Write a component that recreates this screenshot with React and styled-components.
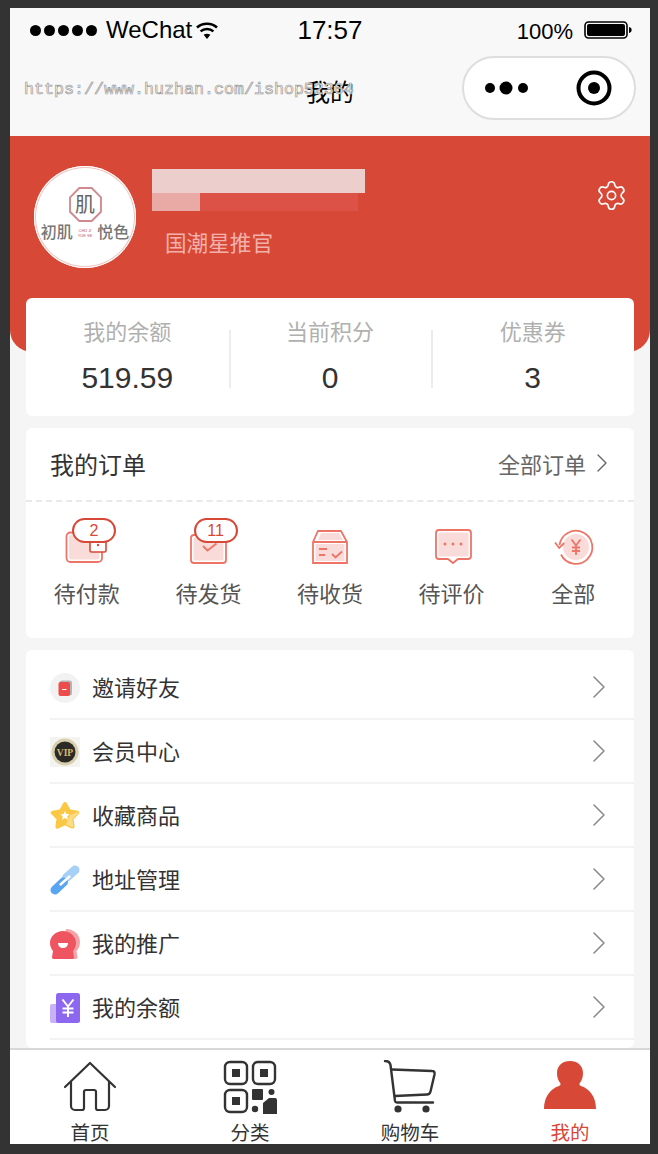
import React from 'react';
import styled, { createGlobalStyle } from 'styled-components';
import { Settings, ChevronRight } from 'lucide-react';

const RED = '#d84837';
const LINE = '#ee7467';
const PALE = '#f9dcd9';

const GlobalStyle = createGlobalStyle`
  html, body { margin: 0; padding: 0; background: #333; }
  * { box-sizing: border-box; }
  body { font-family: "Liberation Sans", "Noto Sans CJK SC", sans-serif; }
`;

const Stage = styled.div`
  width: 658px;
  height: 1154px;
  padding: 8px 8px 10px 10px;
  background: #333;
  overflow: hidden;
`;

const Phone = styled.div`
  width: 640px;
  height: 1136px;
  display: flex;
  flex-direction: column;
  background: #f5f5f5;
  overflow: hidden;
`;

const TopBar = styled.div`
  position: relative;
  height: 128px;
  flex: none;
  background: #f8f8f8;
`;

const StatusRow = styled.div`
  height: 40px;
  padding: 4px 18px 0 20px;
  display: flex;
  align-items: center;
  color: #000;
`;

const Carrier = styled.div`
  display: flex;
  align-items: center;
  width: 260px;
  font-size: 24px;
  svg { margin-left: 3px; }
`;

const SignalDots = styled.div`
  display: flex;
  gap: 3px;
  margin-right: 9px;
`;

const SignalDot = styled.i`
  width: 11px;
  height: 11px;
  border-radius: 50%;
  background: #000;
`;

const Clock = styled.div`
  width: 68px;
  margin-left: 6px;
  text-align: center;
  font-size: 26px;
`;

const BatteryWrap = styled.div`
  margin-left: auto;
  display: flex;
  align-items: center;
  gap: 11px;
  font-size: 22px;
  span { padding-top: 4px; }
`;

const NavRow = styled.div`
  position: relative;
  height: 88px;
  display: flex;
  justify-content: center;
  padding-top: 29px;
`;

const NavTitle = styled.div`
  font-size: 24px;
  line-height: 32px;
  color: #000;
`;

const Watermark = styled.div`
  position: absolute;
  left: 14px;
  top: 32px;
  font-family: "Liberation Mono", monospace;
  font-size: 16.67px;
  line-height: 20px;
  color: #fff;
  -webkit-text-stroke: 0.7px #9a9a9a;
  white-space: nowrap;
`;

const Capsule = styled.div`
  position: absolute;
  right: 14px;
  top: 8px;
  width: 174px;
  height: 64px;
  padding: 0 22px 0 20px;
  border: 2px solid #dedede;
  border-radius: 32px;
  background: #fff;
  display: flex;
  align-items: center;
  justify-content: space-between;
`;

const Hero = styled.div`
  height: 216px;
  flex: none;
  padding: 30px 24px 0;
  background: ${RED};
  border-radius: 0 0 22px 22px;
  display: flex;
  align-items: flex-start;
`;

const Avatar = styled.div`
  width: 102px;
  height: 102px;
  flex: none;
  padding-top: 21px;
  border-radius: 50%;
  background: #fff;
  box-shadow: inset 0 0 0 1px #fff, inset 0 0 0 2px #efc3be;
  display: flex;
  flex-direction: column;
  align-items: center;
`;

const LogoMark = styled.div`
  position: relative;
  width: 33px;
  height: 33px;
  display: flex;
  align-items: center;
  justify-content: center;
  font-size: 20px;
  color: #666;
  svg { position: absolute; inset: 0; }
`;

const LogoText = styled.div`
  margin-top: 3px;
  display: flex;
  align-items: center;
  gap: 5px;
  font-size: 16px;
  font-weight: 500;
  line-height: 20px;
  color: #777;
  white-space: nowrap;
`;

const LogoTiny = styled.span`
  font-size: 4px;
  line-height: 5px;
  color: #c0566a;
  text-align: center;
`;

const Profile = styled.div`
  margin-left: 16px;
  padding-top: 3px;
`;

const BlurName = styled.div`
  width: 213px;
  height: 24px;
  background: #eccfcd;
`;

const BlurSub = styled.div`
  width: 206px;
  height: 18px;
  display: flex;
  background: #dc5247;
`;

const BlurSubLight = styled.div`
  width: 48px;
  background: #e9aaa5;
`;

const Rank = styled.div`
  margin: 18px 0 0 13px;
  font-size: 21.6px;
  line-height: 30px;
  color: #f2b1aa;
`;

const GearWrap = styled.div`
  margin-left: auto;
  margin-right: -2px;
  padding-top: 13px;
  color: #fff;
  display: flex;
`;

const Body = styled.div`
  flex: 1;
  min-height: 0;
  margin-top: -54px;
  padding: 0 16px;
  overflow: hidden;
  display: flex;
  flex-direction: column;
  gap: 12px;
`;

const Card = styled.section`
  flex: none;
  background: #fff;
  border-radius: 6px;
`;

const StatsCard = styled(Card)`
  height: 118px;
  display: grid;
  grid-template-columns: repeat(3, 1fr);
`;

const Stat = styled.div`
  position: relative;
  padding-top: 20px;
  text-align: center;
  & + &::before {
    content: '';
    position: absolute;
    left: 0;
    top: 32px;
    height: 58px;
    border-left: 2px solid #ececec;
  }
`;

const StatLabel = styled.div`
  font-size: 22px;
  line-height: 30px;
  color: #b0b0b0;
`;

const StatValue = styled.div`
  margin-top: 10px;
  font-size: 30px;
  line-height: 40px;
  color: #333;
`;

const OrderCard = styled(Card)`
  height: 210px;
`;

const OrderHead = styled.div`
  height: 74px;
  padding: 0 26px 2px 24px;
  display: flex;
  align-items: center;
  justify-content: space-between;
  border-bottom: 2px dashed #e9e9e9;
`;

const OrderTitle = styled.div`
  font-size: 24px;
  color: #333;
`;

const OrderMore = styled.div`
  display: flex;
  align-items: center;
  gap: 0;
  font-size: 22px;
  color: #666;
  margin-right: -10px;
`;

const OrderGrid = styled.div`
  display: grid;
  grid-template-columns: repeat(5, 1fr);
  padding-top: 22px;
`;

const OrderItem = styled.div`
  position: relative;
  display: flex;
  flex-direction: column;
  align-items: center;
`;

const OrderIcon = styled.svg`
  width: 48px;
  height: 48px;
  display: block;
`;

const OrderLabel = styled.div`
  margin-top: 8px;
  font-size: 22px;
  line-height: 30px;
  color: #555;
`;

const Badge = styled.span`
  position: absolute;
  left: 46px;
  top: -6px;
  width: 44px;
  height: 25px;
  border: 2px solid ${RED};
  border-radius: 13px;
  background: #fff;
  color: ${RED};
  font-size: 16px;
  line-height: 21px;
  text-align: center;
`;

const MenuCard = styled(Card)`
  flex: 1;
  padding: 6px 0 0 24px;
`;

const MenuRow = styled.div`
  height: 64px;
  padding-right: 15px;
  border-bottom: 2px solid #f3f3f3;
  display: flex;
  align-items: center;
  color: #888;
`;

const MenuIcon = styled.svg`
  width: 30px;
  height: 30px;
  flex: none;
  display: block;
  margin: 2px 12px 0 0;
`;

const MenuText = styled.div`
  flex: 1;
  padding-bottom: 2px;
  font-size: 22px;
  color: #333;
`;

const TabBar = styled.nav`
  height: 96px;
  flex: none;
  border-top: 2px solid #d8d8d8;
  background: #fff;
  display: grid;
  grid-template-columns: repeat(4, 1fr);
  overflow: hidden;
`;

const Tab = styled.div`
  padding-top: 10px;
  display: flex;
  flex-direction: column;
  align-items: center;
  color: ${props => (props.$active ? RED : '#333')};
`;

const TabIcon = styled.svg`
  width: 54px;
  height: 54px;
  display: block;
`;

const TabLabel = styled.div`
  margin-top: 6px;
  font-size: 19.5px;
  line-height: 26px;
`;

const Wifi = () => (
  <svg width="24" height="20" viewBox="0 0 24 20" fill="none" stroke="#000" strokeWidth="2.6">
    <path d="M2 7.5c5.6-5 14.4-5 20 0" />
    <path d="M5.6 11.4c3.6-3.2 9.2-3.2 12.8 0" />
    <path d="M12 19l-3.4-4.2c2-1.4 4.8-1.4 6.800 0z" fill="#000" stroke="none" />
  </svg>
);

const Battery = () => (
  <svg width="48" height="18" viewBox="0 0 48 18">
    <rect x="1" y="1" width="42" height="16" rx="3.5" fill="none" stroke="#000" strokeWidth="1.6" />
    <rect x="3" y="3" width="38" height="12" rx="2" fill="#000" />
    <path d="M45 6c2 .4 2.6 1.6 2.6 3s-.6 2.600-2.600 3z" fill="#000" />
  </svg>
);

const CapsuleDots = () => (
  <svg width="46" height="16" viewBox="0 0 46 16" fill="#000">
    <circle cx="6" cy="8" r="5" />
    <circle cx="22" cy="8" r="6.500" />
    <circle cx="39" cy="8" r="5" />
  </svg>
);

const CapsuleTarget = () => (
  <svg width="36" height="36" viewBox="0 0 36 36">
    <circle cx="18" cy="18" r="15.500" fill="none" stroke="#000" strokeWidth="4" />
    <circle cx="18" cy="18" r="6" fill="#000" />
  </svg>
);

const Wallet = () => (
  <OrderIcon viewBox="0 0 48 48">
    <rect x="3.500" y="8.500" width="35.500" height="29.500" rx="4" fill="#fff" stroke={LINE} strokeWidth="1.800" />
    <rect x="6" y="11" width="30.500" height="24.500" rx="2" fill={PALE} />
    <rect x="27" y="15" width="16" height="13" rx="1.500" fill="#fff" stroke={RED} strokeWidth="1.600" />
    <circle cx="35" cy="21" r="1.200" fill={RED} />
  </OrderIcon>
);

const Shipping = () => (
  <OrderIcon viewBox="0 0 48 48">
    <rect x="7" y="11" width="35" height="28" rx="3" fill="#fff" stroke={LINE} strokeWidth="1.800" />
    <rect x="9.500" y="13.500" width="30" height="23" rx="1.500" fill={PALE} />
    <path d="M19 22l4.500 4.500 9-7" fill="none" stroke={LINE} strokeWidth="1.800" />
  </OrderIcon>
);

const Parcel = () => (
  <OrderIcon viewBox="0 0 48 48">
    <path d="M7 18l5-11h23l6 11v21H7z" fill="#fff" stroke={LINE} strokeWidth="1.800" />
    <path d="M12 16l3-7h18l4 7z" fill={PALE} />
    <rect x="9.500" y="20" width="29" height="17" fill={PALE} />
    <path d="M7 18h34" stroke={LINE} strokeWidth="1.800" />
    <path d="M13 25h8M13 31h6" stroke={LINE} strokeWidth="2" />
    <path d="M26 30l3.500 3.500 6.500-6" fill="none" stroke={LINE} strokeWidth="1.800" />
  </OrderIcon>
);

const Comment = () => (
  <OrderIcon viewBox="0 0 48 48">
    <path d="M11 6h29a3 3 0 0 1 3 3v23a3 3 0 0 1-3 3H30l-5 4-5-4H11a3 3 0 0 1-3-3V9a3 3 0 0 1 3-3z" fill="#fff" stroke={LINE} strokeWidth="1.800" />
    <rect x="10.500" y="8.500" width="30" height="24" rx="1.500" fill={PALE} />
    <circle cx="17" cy="20" r="1.500" fill={LINE} />
    <circle cx="25" cy="20" r="1.500" fill={LINE} />
    <circle cx="33" cy="20" r="1.500" fill={LINE} />
  </OrderIcon>
);

const Refund = () => (
  <OrderIcon viewBox="0 0 48 48">
    <circle cx="27" cy="23" r="13" fill={PALE} />
    <path d="M10.500 21A16.500 16.500 0 1 1 12 30.500" fill="none" stroke={LINE} strokeWidth="1.800" />
    <path d="M6 18.500l4.200 5.500 5-5" fill="none" stroke={LINE} strokeWidth="1.800" />
    <path d="M22.500 15.500l4.500 6 4.500-6M27 21.500V31M23 23.500h8M23 27h8" fill="none" stroke={LINE} strokeWidth="1.800" />
  </OrderIcon>
);

const InviteIcon = () => (
  <MenuIcon viewBox="0 0 30 30">
    <circle cx="15" cy="15" r="15" fill="#f2f2f2" />
    <rect x="9.500" y="7.500" width="12.500" height="15" rx="2.500" fill="#b4b4b4" />
    <rect x="8.500" y="9" width="11.500" height="14" rx="2" fill="#ee4b4b" />
    <path d="M12 16.500h4.500" stroke="#fff" strokeWidth="1" />
  </MenuIcon>
);

const VipIcon = () => (
  <MenuIcon viewBox="0 0 30 30">
    <rect width="30" height="30" fill="#f3f3f0" />
    <circle cx="15" cy="15" r="13.500" fill="#d8cfae" />
    <circle cx="15" cy="15" r="10.500" fill="#2c2a26" />
    <text x="15" y="18.500" textAnchor="middle" fontFamily="Liberation Serif, serif" fontWeight="700" fontSize="9.500" fill="#d4bd74">VIP</text>
  </MenuIcon>
);

const StarIcon = () => (
  <MenuIcon viewBox="0 0 30 30">
    <path d="M15 3l4 7.200 8.300 1.400-5.800 6 1.100 8-7.600-3.500-7.600 3.500 1.100-8-5.800-6 8.300-1.400z" fill="#fbc846" stroke="#fbc846" strokeWidth="4" strokeLinejoin="round" />
    <path d="M20.500 15l7.500-3.400-6.500 6 1.100 8-5.600-2.600z" fill="#fcdc88" stroke="#fcdc88" strokeWidth="1.500" strokeLinejoin="round" />
    <path d="M15 10l1.400 2.900 3.200.4-2.300 2.200.6 3.200-2.900-1.600-2.900 1.600.6-3.200-2.300-2.200 3.200-.4z" fill="#fff" />
  </MenuIcon>
);

const LinkIcon = () => (
  <MenuIcon viewBox="0 0 30 30" fill="none" strokeLinecap="round">
    <path d="M16.500 12.500L25 5" stroke="#a6d0f8" strokeWidth="9" />
    <path d="M5 25l8.500-8" stroke="#5aa5f2" strokeWidth="9" />
    <path d="M10.500 19.500l9-8" stroke="#fff" strokeWidth="2.400" />
  </MenuIcon>
);

const PromoIcon = () => (
  <MenuIcon viewBox="0 0 30 30">
    <path d="M16 0c8 0 14 5.500 14 13 0 4-1.500 7-3.500 9l1 6c0 1-.5 1.800-1.500 2H12z" fill="#f4a4a9" />
    <path d="M13 2C6 2 0 7 0 14c0 3.500 1.500 6 3 8l-1 6c0 1 .6 2 1.500 2h19c1 0 1.600-1 1.500-2l-1-6c1.500-2 3-4.500 3-8C26 7 20 2 13 2z" fill="#ef5560" />
    <path d="M8 14h10c0 3-2.200 5-5 5s-5-2-5-5z" fill="#fff" />
  </MenuIcon>
);

const BalanceIcon = () => (
  <MenuIcon viewBox="0 0 30 30">
    <rect y="11" width="14" height="19" rx="2" fill="#c7b2f6" />
    <rect x="6" width="24" height="30" rx="2.500" fill="#8e67f0" />
    <path d="M12.500 6.500l5.500 7 5.500-7M18 13.500V24M12.500 15.500h11M12.500 19.500h11" fill="none" stroke="#fff" strokeWidth="2" />
  </MenuIcon>
);

const HomeTab = () => (
  <TabIcon viewBox="0 0 54 54" fill="none" stroke="currentColor" strokeWidth="2.200" strokeLinejoin="round" strokeLinecap="round">
    <path d="M2 27L27 3l25 24" />
    <path d="M8 22v24a4 4 0 0 0 4 4h7a2 2 0 0 0 2-2V32a2 2 0 0 1 2-2h8a2 2 0 0 1 2 2v16a2 2 0 0 0 2 2h7a4 4 0 0 0 4-4V22" />
  </TabIcon>
);

const GridTab = () => (
  <TabIcon viewBox="0 0 54 54" fill="none" stroke="currentColor" strokeWidth="2.400">
    <rect x="2" y="2" width="22" height="22" rx="5" />
    <rect x="30" y="2" width="22" height="22" rx="5" />
    <rect x="2" y="30" width="22" height="22" rx="5" />
    <rect x="9" y="9" width="8" height="8" fill="currentColor" stroke="none" />
    <rect x="37" y="9" width="8" height="8" fill="currentColor" stroke="none" />
    <rect x="9" y="37" width="8" height="8" fill="currentColor" stroke="none" />
    <rect x="29" y="29" width="11" height="11" rx="1" fill="currentColor" stroke="none" />
    <circle cx="48.500" cy="32" r="3" fill="currentColor" stroke="none" />
    <circle cx="32" cy="49" r="3.200" fill="currentColor" stroke="none" />
    <path d="M40 54V43l6-5h6a2 2 0 0 1 2 2v14z" fill="currentColor" stroke="none" />
  </TabIcon>
);

const CartTab = () => (
  <TabIcon viewBox="0 0 54 54" fill="none" stroke="currentColor" strokeWidth="2.400" strokeLinecap="round" strokeLinejoin="round">
    <path d="M2 1c3 0 5 1.500 5.500 4l4.500 36c.2 1 1 1.500 2 1.500h36" />
    <path d="M9 9.500l40 1.500c2 0 3 1 2.500 3.500l-4 17c-.5 2-1.500 3-3.500 3l-32 1.500" />
    <circle cx="15" cy="49" r="3.600" fill="currentColor" stroke="none" />
    <circle cx="43" cy="49" r="3.600" fill="currentColor" stroke="none" />
  </TabIcon>
);

const UserTab = () => (
  <TabIcon viewBox="0 0 54 54" fill="currentColor">
    <path d="M1 49c0-12 6-20 15-23 2-.7 2-2 .5-4-1.500-2.200-2.500-5-2.500-9C14 5.500 19.500 1 27 1s13 4.500 13 12c0 4-1 6.800-2.500 9-1.500 2-1.500 3.300.5 4 9 3 15 11 15 23z" />
  </TabIcon>
);

const orders = [
  { label: '待付款', Icon: Wallet, badge: '2' },
  { label: '待发货', Icon: Shipping, badge: '11' },
  { label: '待收货', Icon: Parcel },
  { label: '待评价', Icon: Comment },
  { label: '全部', Icon: Refund },
];

const menu = [
  { label: '邀请好友', Icon: InviteIcon },
  { label: '会员中心', Icon: VipIcon },
  { label: '收藏商品', Icon: StarIcon },
  { label: '地址管理', Icon: LinkIcon },
  { label: '我的推广', Icon: PromoIcon },
  { label: '我的余额', Icon: BalanceIcon },
];

const stats = [
  { label: '我的余额', value: '519.59' },
  { label: '当前积分', value: '0' },
  { label: '优惠券', value: '3' },
];

const tabs = [
  { label: '首页', Icon: HomeTab },
  { label: '分类', Icon: GridTab },
  { label: '购物车', Icon: CartTab },
  { label: '我的', Icon: UserTab, active: true },
];

const App = () => (
  <Stage>
    <GlobalStyle />
    <Phone>
      <TopBar>
        <StatusRow>
          <Carrier>
            <SignalDots>
              {[0, 1, 2, 3, 4].map(i => <SignalDot key={i} />)}
            </SignalDots>
            WeChat
            <Wifi />
          </Carrier>
          <Clock>17:57</Clock>
          <BatteryWrap>
            <span>100%</span>
            <Battery />
          </BatteryWrap>
        </StatusRow>
        <NavRow>
          <NavTitle>我的</NavTitle>
          <Watermark>https://www.huzhan.com/ishop52364</Watermark>
          <Capsule>
            <CapsuleDots />
            <CapsuleTarget />
          </Capsule>
        </NavRow>
      </TopBar>

      <Hero>
        <Avatar>
          <LogoMark>
            <svg viewBox="0 0 32 34" fill="none" stroke="#cf8a8f" strokeWidth="1.800">
              <path d="M10 1h12l9 9v14l-9 9H10l-9-9V10z" />
            </svg>
            肌
          </LogoMark>
          <LogoText>
            初肌
            <LogoTiny>CHU JI<br />YUE SE</LogoTiny>
            悦色
          </LogoText>
        </Avatar>
        <Profile>
          <BlurName />
          <BlurSub><BlurSubLight /></BlurSub>
          <Rank>国潮星推官</Rank>
        </Profile>
        <GearWrap><Settings size={33} strokeWidth={1.200} /></GearWrap>
      </Hero>

      <Body>
        <StatsCard>
          {stats.map(s => (
            <Stat key={s.label}>
              <StatLabel>{s.label}</StatLabel>
              <StatValue>{s.value}</StatValue>
            </Stat>
          ))}
        </StatsCard>

        <OrderCard>
          <OrderHead>
            <OrderTitle>我的订单</OrderTitle>
            <OrderMore>全部订单<ChevronRight size={32} strokeWidth={1} /></OrderMore>
          </OrderHead>
          <OrderGrid>
            {orders.map(({ label, Icon, badge }) => (
              <OrderItem key={label}>
                <Icon />
                {badge && <Badge>{badge}</Badge>}
                <OrderLabel>{label}</OrderLabel>
              </OrderItem>
            ))}
          </OrderGrid>
        </OrderCard>

        <MenuCard>
          {menu.map(({ label, Icon }) => (
            <MenuRow key={label}>
              <Icon />
              <MenuText>{label}</MenuText>
              <ChevronRight size={40} strokeWidth={0.900} />
            </MenuRow>
          ))}
        </MenuCard>
      </Body>

      <TabBar>
        {tabs.map(({ label, Icon, active }) => (
          <Tab key={label} $active={active}>
            <Icon />
            <TabLabel>{label}</TabLabel>
          </Tab>
        ))}
      </TabBar>
    </Phone>
  </Stage>
);

export default App;
